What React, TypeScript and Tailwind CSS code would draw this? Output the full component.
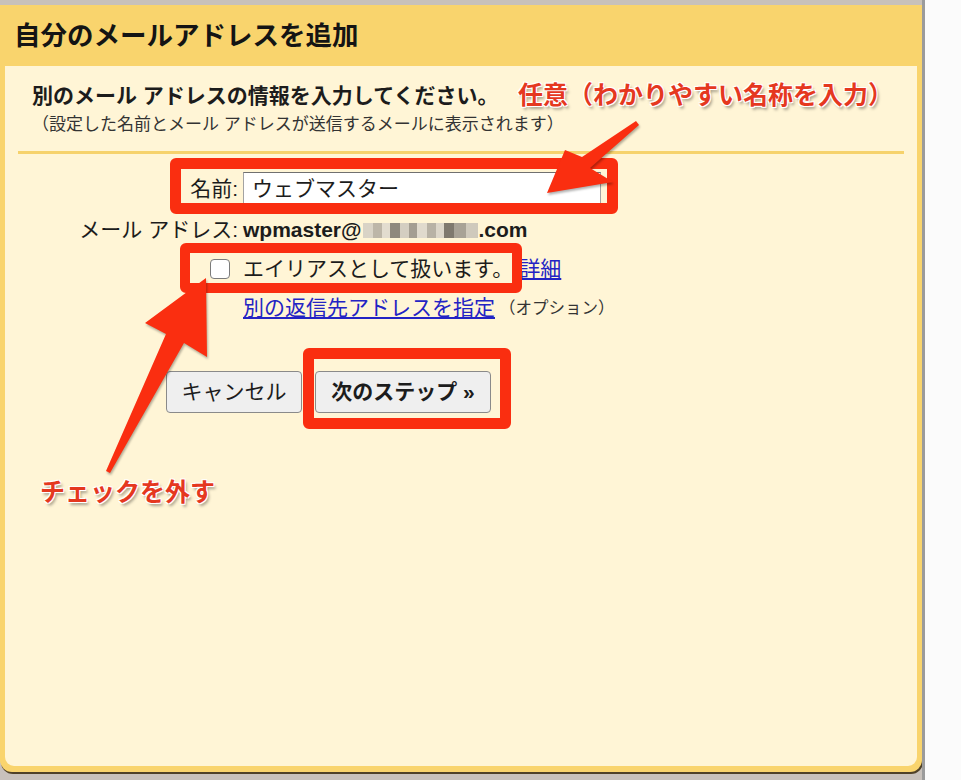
const redaction = [
  ['#d9d3c6', 10], ['#bdb6a8', 9], ['#e2dccf', 8], ['#8f897d', 10], ['#d4cec1', 9], ['#a49e92', 8],
  ['#e0dacd', 10], ['#b8b2a5', 9], ['#dcd6c9', 8], ['#7f796e', 10], ['#a8a296', 12], ['#cfc9bc', 12],
];

function Redacted() {
  return (
    <span className="mx-[1px] inline-flex h-[15px] items-stretch overflow-hidden">
      {redaction.map(([c, w], i) => (
        <span key={i} style={{ backgroundColor: c as string, width: w as number }} />
      ))}
    </span>
  );
}

function Note({ children, className }: { children: React.ReactNode; className: string }) {
  return (
    <div
      className={`absolute text-[25px] font-bold leading-[30px] text-[#e5381f] [text-shadow:1px_1px_0_#fff,-1px_-1px_0_#fff,1px_-1px_0_#fff,-1px_1px_0_#fff,2px_3px_3px_rgba(0,0,0,0.35)] ${className}`}
    >
      {children}
    </div>
  );
}

export default function App() {
  return (
    <div className="relative flex h-[780px] w-[961px] overflow-hidden bg-white font-['Liberation_Sans','Noto_Sans_CJK_JP',sans-serif] text-[#1c1c1c]">
      <div className="flex w-[922px] flex-col bg-[#c8c1bb]">
        <div className="h-[5px] shrink-0" />
        <div className="flex h-[767px] flex-col rounded-b-[12px] bg-[#f9d46d] shadow-[1px_2px_0_#4f4128]">
          <div className="flex h-[61px] shrink-0 items-center px-[14px] pt-[2px] text-[26.5px] font-bold text-[#141414]">
            自分のメールアドレスを追加
          </div>
          <div className="mx-[5px] mb-[6px] flex-1 rounded-b-[9px] bg-[#fff5d6]">
            <div className="pl-[27px] pt-[15px]">
              <p className="text-[21px] font-bold leading-[30px]">別のメール アドレスの情報を入力してください。</p>
              <p className="mt-[3px] text-[17px] leading-[22px] text-[#333]">
                （設定した名前とメール アドレスが送信するメールに表示されます）
              </p>
            </div>
            <div className="mx-[13px] mt-[15px] h-[3px] bg-[#f6d26c]" />

            <div className="mt-[18px] grid grid-cols-[233px_1fr] gap-x-[5px] gap-y-[9px] text-[21px]">
              <div className="flex h-[34px] items-center justify-end">名前:</div>
              <div className="flex h-[34px] w-[358px] items-center border border-[#a3a3a3] border-t-[#707070] bg-white pl-[8px]">
                ウェブマスター
              </div>

              <div className="flex h-[30px] items-center justify-end">メール アドレス:</div>
              <div className="flex h-[30px] items-center font-bold">
                wpmaster@
                <Redacted />
                .com
              </div>

              <div className="flex h-[30px] items-center justify-end pr-[8px]">
                <span className="h-[20px] w-[20px] rounded-[4px] border border-[#7b7b7b] bg-white" />
              </div>
              <div className="flex h-[30px] items-center">
                エイリアスとして扱います。
                <span className="ml-[6px] text-[#2323c4] underline">詳細</span>
              </div>

              <div />
              <div className="flex h-[30px] items-center">
                <span className="text-[#2323c4] underline">別の返信先アドレスを指定</span>
                <span className="ml-[4px] text-[16.5px] text-[#333]">（オプション）</span>
              </div>
            </div>

            <div className="mt-[48px] flex gap-[13px] pl-[161px] text-[21px]">
              <button className="h-[42px] w-[136px] rounded-[4px] border border-[#8a8a8a] bg-[#efefef] text-[#1c1c1c]">
                キャンセル
              </button>
              <button className="h-[42px] w-[176px] rounded-[4px] border border-[#8a8a8a] bg-[#efefef] font-bold text-[#1c1c1c]">
                次のステップ »
              </button>
            </div>
          </div>
        </div>
      </div>
      <div className="flex-1 border-l-[3px] border-[#9b9b9b] bg-[#fbfbfb]" />

      {/* annotations */}
      <div className="absolute left-[170px] top-[158px] h-[56px] w-[448px] rounded-[6px] border-[11px] border-[#fa2e10]" />
      <div className="absolute left-[180px] top-[243px] h-[50px] w-[342px] rounded-[6px] border-[10px] border-[#fa2e10]" />
      <div className="absolute left-[303px] top-[348px] h-[81px] w-[208px] rounded-[6px] border-[11px] border-[#fa2e10]" />

      <svg
        className="pointer-events-none absolute left-0 top-0 drop-shadow-[1px_2px_1px_rgba(0,0,0,0.3)]"
        width="961"
        height="780"
        viewBox="0 0 961 780"
      >
        <polygon points="636,121 582,157 565,150 547,193 613,182 590,168 639,125" fill="#fa2e10" />
        <polygon points="106,471 166,334 145,323 206,278 207,357 184,343 110,473" fill="#fa2e10" />
      </svg>

      <Note className="left-[518px] top-[80px]">任意（わかりやすい名称を入力）</Note>
      <Note className="left-[40px] top-[477px]">チェックを外す</Note>
    </div>
  );
}
